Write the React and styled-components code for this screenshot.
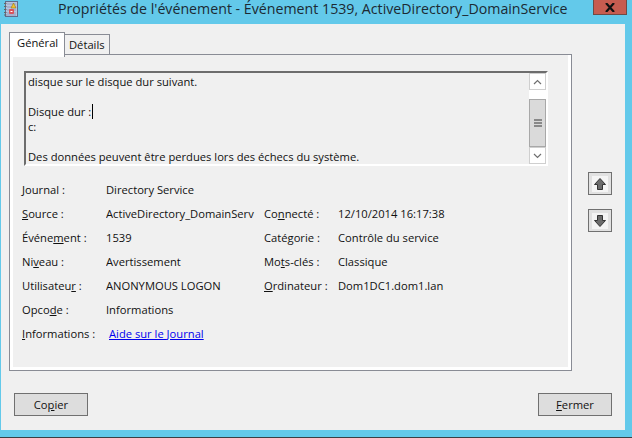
import styled, { createGlobalStyle } from "styled-components";

const GlobalStyle = createGlobalStyle`
  html, body {
    margin: 0;
    padding: 0;
    background: #63c9ea;
  }
  * {
    box-sizing: border-box;
  }
`;

const Window = styled.div`
  width: 632px;
  height: 438px;
  display: flex;
  flex-direction: column;
  background: #63c9ea;
  border-bottom: 1px solid #3a3f44;
  font-family: "Open Sans", "Noto Sans", sans-serif;
  font-size: 11.2px;
  color: #111;
  overflow: hidden;
`;
const TitleBar = styled.div`
  height: 24px;
  flex: none;
  display: flex;
  align-items: flex-start;
  padding-left: 4px;
`;
const AppIcon = styled.svg`
  width: 16px;
  height: 16px;
  margin-top: 1px;
  flex: none;
`;
const Title = styled.span`
  margin-left: 38px;
  font-size: 14.2px;
  line-height: 18px;
  color: #1c2a33;
  white-space: nowrap;
  flex: 1;
`;
const CloseButton = styled.div`
  width: 34px;
  height: 15px;
  margin-right: 5px;
  background: #c75c50;
  border: 1px solid #6f4a45;
  border-top: none;
  display: flex;
  align-items: center;
  justify-content: center;
`;
const Client = styled.div`
  flex: 1;
  margin: 0 7px 7px 1px;
  background: #f0f0f0;
  padding: 8px 13px 14px 8px;
  display: flex;
  flex-direction: column;
`;
const Main = styled.div`
  display: flex;
  flex: 1;
`;
const TabArea = styled.div`
  width: 563px;
  display: flex;
  flex-direction: column;
`;
const TabStrip = styled.div`
  height: 23px;
  display: flex;
  align-items: flex-start;
  position: relative;
  z-index: 1;
  margin-bottom: -1px;
`;
const Tab = styled.div`
  height: ${(p) => (p.$active ? "25px" : "21px")};
  width: ${(p) => (p.$active ? "56px" : "46px")};
  margin-left: ${(p) => (p.$active ? "0" : "-1px")};
  margin-top: ${(p) => (p.$active ? "0" : "2px")};
  background: ${(p) => (p.$active ? "#fff" : "#f0f0f0")};
  border: 1px solid #898c95;
  border-bottom: ${(p) => (p.$active ? "none" : "1px solid #898c95")};
  padding-left: ${(p) => (p.$active ? "7px" : "4px")};
  line-height: ${(p) => (p.$active ? "20px" : "19px")};
`;
const TabPanel = styled.div`
  height: 317px;
  border: 1px solid #898c95;
  background: #f0f0f0;
  box-shadow: inset 3px 0 0 #fff, inset -3px 0 0 #fff, inset 0 -3px 0 #fff;
  padding: 16px 23px 0 12px;
`;
const TextBox = styled.div`
  height: 95px;
  margin: 0 0 11px 2px;
  display: flex;
  border-top: 2px solid #6d6d6d;
  border-left: 2px solid #6d6d6d;
  border-right: 2px solid #fff;
  border-bottom: 2px solid #fff;
`;
const TextContent = styled.div`
  flex: 1;
  padding: 1px 2px 0;
  overflow: hidden;
`;
const Line = styled.div`
  height: 15px;
  line-height: 15px;
  white-space: nowrap;
`;
const Caret = styled.span`
  display: inline-block;
  width: 1px;
  height: 15px;
  background: #000;
  vertical-align: top;
  margin-left: 1px;
`;
const ScrollBar = styled.div`
  width: 17px;
  flex: none;
  display: flex;
  flex-direction: column;
  background: #fff;
`;
const ScrollArrow = styled.div`
  height: 17px;
  flex: none;
  border: 1px solid #cfcfcf;
  background: #fff;
  display: flex;
  align-items: center;
  justify-content: center;
`;
const ScrollTrack = styled.div`
  flex: 1;
  display: flex;
  flex-direction: column;
  padding-top: 9px;
`;
const ScrollThumb = styled.div`
  flex: 1;
  background: #dadada;
  border: 1px solid #a8a8a8;
  display: flex;
  align-items: center;
  justify-content: center;
`;
const Fields = styled.div`
  display: grid;
  grid-template-columns: 84px 158px 74px 1fr;
  grid-auto-rows: 24px;
  align-items: center;
`;
const Label = styled.div`
  white-space: nowrap;
`;
const Value = styled.div`
  white-space: nowrap;
  overflow: hidden;
  max-width: ${(p) => (p.$clip ? "150px" : "none")};
  grid-column: ${(p) => (p.$wide ? "2 / 5" : "auto")};
`;
const Key = styled.span`
  text-decoration: underline;
`;
const HelpLink = styled.a`
  color: #0000ee;
  text-decoration: underline;
  margin-left: 3px;
`;
const SideButtons = styled.div`
  margin-left: 16px;
  padding-top: 140px;
  display: flex;
  flex-direction: column;
  gap: 14px;
`;
const ArrowButton = styled.div`
  width: 24px;
  height: 23px;
  background: #e1e1e1;
  border: 1px solid #707070;
  display: flex;
  align-items: center;
  justify-content: center;
`;
const Footer = styled.div`
  display: flex;
  justify-content: space-between;
  padding: 22px 0 0 5px;
`;
const PushButton = styled.div`
  width: 74px;
  height: 23px;
  background: #dddddd;
  border: 1px solid #707070;
  display: flex;
  align-items: center;
  justify-content: center;
`;

function Arrow({ down }) {
  return (
    <svg width="16" height="16" viewBox="0 0 16 16">
      <rect width="16" height="16" fill="#f4f4f4" />
      <path
        d={down ? "M5.500 2.500h5v5h3L8 13.500 2.500 7.500h3z" : "M8 2.500l5.500 6h-3v5h-5v-5h-3z"}
        fill="#6b6b6b"
        stroke="#333"
      />
    </svg>
  );
}

function Chevron({ down }) {
  return (
    <svg width="9" height="6" viewBox="0 0 9 6">
      <path
        d={down ? "M1 1l3.500 3.500L8 1" : "M1 5l3.500-3.500L8 5"}
        fill="none"
        stroke="#6f6f6f"
        strokeWidth="1.2"
      />
    </svg>
  );
}

export default function App() {
  return (
    <>
      <GlobalStyle />
      <Window>
        <TitleBar>
          <AppIcon viewBox="0 0 16 16">
            <rect x="1.500" y="0.500" width="12" height="15" fill="#b9c4dc" stroke="#5f6b8c" />
            <path d="M3 3h9M3 6h9M3 9h9M3 12h9M3 14h9" stroke="#8f9cc0" />
            <path d="M0 2.500h2.500M0 5.500h2.500M0 8.500h2.500M0 11.500h2.500M0 14h2.500" stroke="#666" />
            <path d="M9.500 2L12 7H7z" fill="#f2c230" stroke="#8a6d00" strokeWidth=".5" />
            <rect x="5" y="8" width="5" height="5" rx="1" fill="#d9535c" />
            <rect x="6.500" y="10" width="2" height="1" fill="#fff" />
          </AppIcon>
          <Title>Propriétés de l'événement - Événement 1539, ActiveDirectory_DomainService</Title>
          <CloseButton>
            <svg width="10" height="9" viewBox="0 0 10 9">
              <path d="M1 0l8 9M9 0L1 9" stroke="#111" strokeWidth="2.2" />
            </svg>
          </CloseButton>
        </TitleBar>
        <Client>
          <Main>
            <TabArea>
              <TabStrip>
                <Tab $active>Général</Tab>
                <Tab>Détails</Tab>
              </TabStrip>
              <TabPanel>
                <TextBox>
                  <TextContent>
                    <Line>disque sur le disque dur suivant.</Line>
                    <Line />
                    <Line>Disque dur :<Caret /></Line>
                    <Line>c:</Line>
                    <Line />
                    <Line>Des données peuvent être perdues lors des échecs du système.</Line>
                  </TextContent>
                  <ScrollBar>
                    <ScrollArrow><Chevron /></ScrollArrow>
                    <ScrollTrack>
                      <ScrollThumb>
                        <svg width="8" height="8" viewBox="0 0 8 8">
                          <path d="M0 1h8M0 4h8M0 7h8" stroke="#6f6f6f" strokeWidth="1.500" />
                        </svg>
                      </ScrollThumb>
                    </ScrollTrack>
                    <ScrollArrow><Chevron down /></ScrollArrow>
                  </ScrollBar>
                </TextBox>
                <Fields>
                  <Label><Key>J</Key>ournal :</Label>
                  <Value $wide>Directory Service</Value>
                  <Label><Key>S</Key>ource :</Label>
                  <Value $clip>ActiveDirectory_DomainServ</Value>
                  <Label>Co<Key>n</Key>necté :</Label>
                  <Value>12/10/2014 16:17:38</Value>
                  <Label>Événe<Key>m</Key>ent :</Label>
                  <Value>1539</Value>
                  <Label>Caté<Key>g</Key>orie :</Label>
                  <Value>Contrôle du service</Value>
                  <Label>Ni<Key>v</Key>eau :</Label>
                  <Value>Avertissement</Value>
                  <Label>Mo<Key>t</Key>s-clés :</Label>
                  <Value>Classique</Value>
                  <Label>Utilisateu<Key>r</Key> :</Label>
                  <Value>ANONYMOUS LOGON</Value>
                  <Label><Key>O</Key>rdinateur :</Label>
                  <Value>Dom1DC1.dom1.lan</Value>
                  <Label>Opco<Key>d</Key>e :</Label>
                  <Value $wide>Informations</Value>
                  <Label><Key>I</Key>nformations :</Label>
                  <Value $wide><HelpLink href="#">Aide sur le Journal</HelpLink></Value>
                </Fields>
              </TabPanel>
            </TabArea>
            <SideButtons>
              <ArrowButton><Arrow /></ArrowButton>
              <ArrowButton><Arrow down /></ArrowButton>
            </SideButtons>
          </Main>
          <Footer>
            <PushButton>Co<Key>p</Key>ier</PushButton>
            <PushButton><Key>F</Key>ermer</PushButton>
          </Footer>
        </Client>
      </Window>
    </>
  );
}
